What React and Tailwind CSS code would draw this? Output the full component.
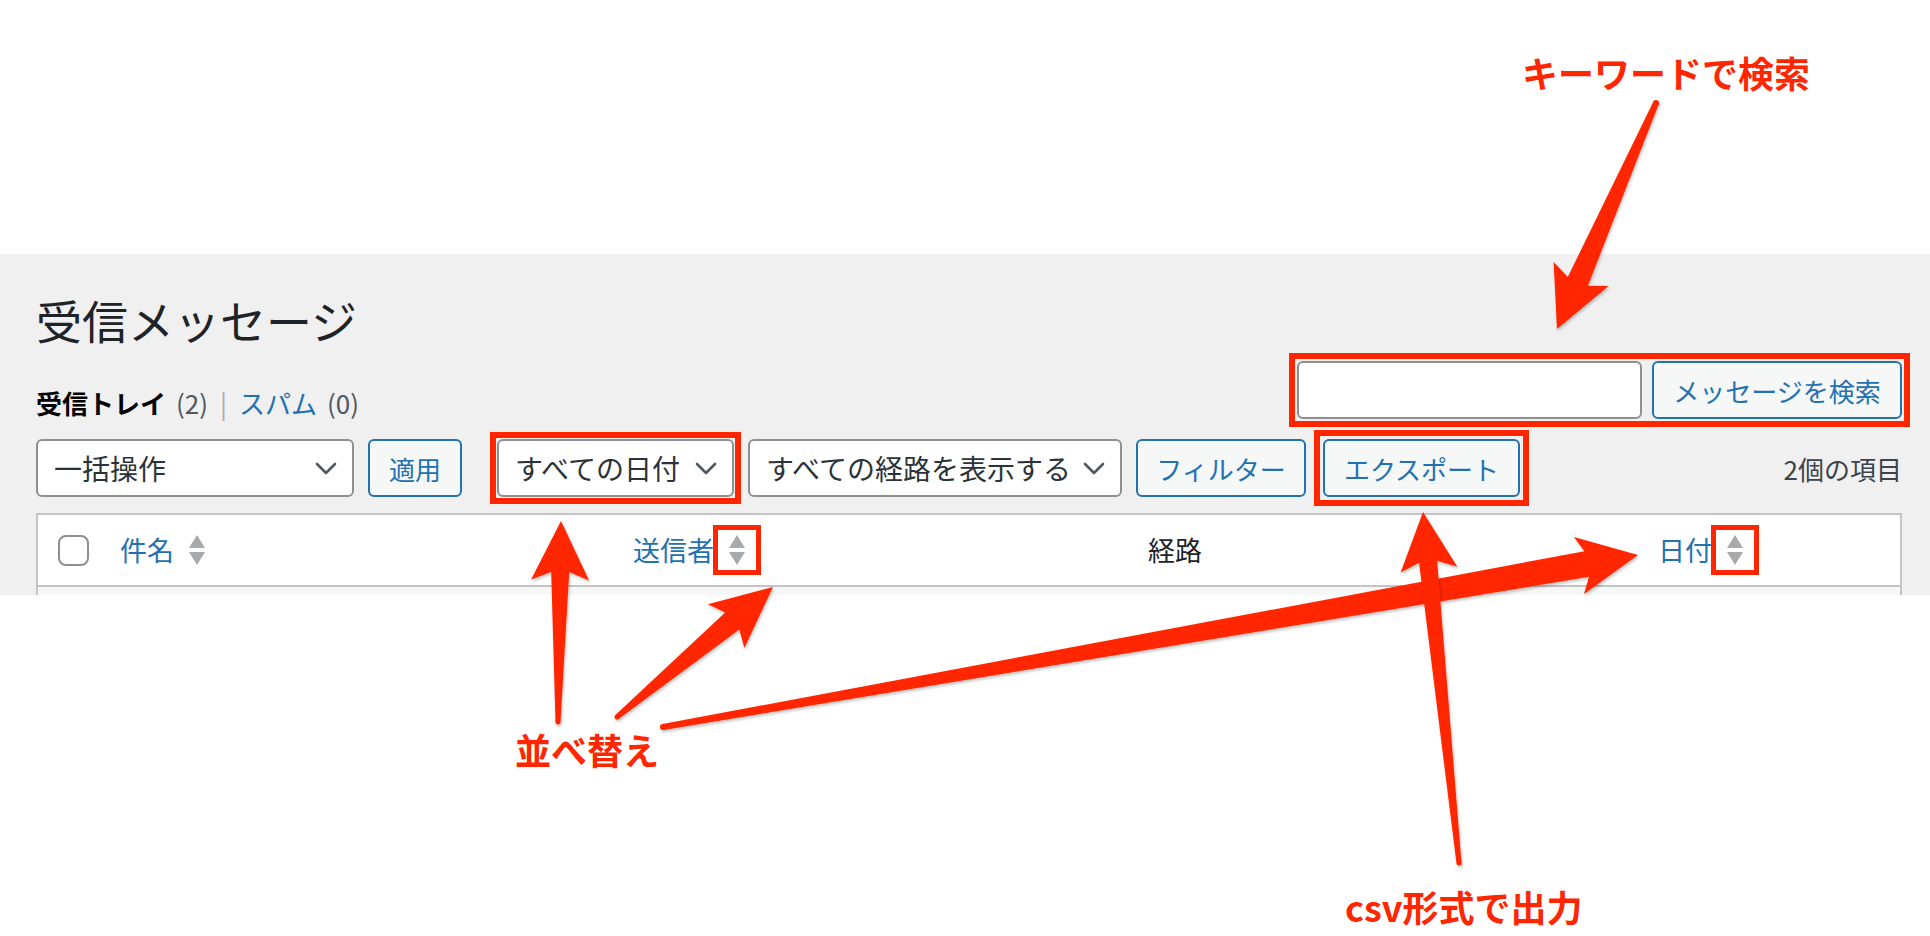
const RED = "#ff2600";

function arrowPoints(tx, ty, hx, hy, tailW, neckW, headW, headL, notch = 8) {
  const dx = hx - tx;
  const dy = hy - ty;
  const len = Math.hypot(dx, dy);
  const ux = dx / len;
  const uy = dy / len;
  const nx = -uy;
  const ny = ux;
  const bx = hx - ux * headL;
  const by = hy - uy * headL;
  const kx = bx + ux * notch;
  const ky = by + uy * notch;
  const pts = [
    [tx + (nx * tailW) / 2, ty + (ny * tailW) / 2],
    [kx + (nx * neckW) / 2, ky + (ny * neckW) / 2],
    [bx + (nx * headW) / 2, by + (ny * headW) / 2],
    [hx, hy],
    [bx - (nx * headW) / 2, by - (ny * headW) / 2],
    [kx - (nx * neckW) / 2, ky - (ny * neckW) / 2],
    [tx - (nx * tailW) / 2, ty - (ny * tailW) / 2],
  ];
  return pts.map((p) => p.map((v) => v.toFixed(1)).join(",")).join(" ");
}

// tail x,y / tip x,y / tail width / neck width / head width / head length
const arrows = [
  [1656, 103, 1557, 329, 6, 22, 60, 60],
  [558, 722, 561, 521, 5, 18, 58, 59],
  [617, 717, 773, 587, 5, 22, 57, 61],
  [663, 727, 1638, 555, 6, 26, 58, 60],
  [1459, 863, 1423, 512, 5, 18, 57, 58],
];

function Chevron() {
  return (
    <svg width="22" height="13" viewBox="0 0 22 13" className="shrink-0">
      <polyline points="2,2 11,11 20,2" fill="none" stroke="#50575e" strokeWidth="2.6" strokeLinecap="round" strokeLinejoin="round" />
    </svg>
  );
}

function SortIcon({ marked }) {
  return (
    <span
      className={
        "ml-[4px] inline-flex h-[40px] w-[38px] flex-col items-center justify-center gap-[4px] " +
        (marked ? "outline-[5px] outline-solid outline-[#ff2600]" : "")
      }
    >
      <svg width="16" height="13" viewBox="0 0 16 13">
        <polygon points="0,13 8,0 16,13" fill="#a7aaad" />
      </svg>
      <svg width="16" height="13" viewBox="0 0 16 13">
        <polygon points="0,0 16,0 8,13" fill="#a7aaad" />
      </svg>
    </span>
  );
}

function FakeSelect({ label, width }) {
  return (
    <div
      className={
        "flex h-[58px] items-center justify-between rounded-[6px] border-2 border-[#8c8f94] bg-white pl-[16px] pr-[15px] text-[28px] text-[#2c3338] " +
        width
      }
    >
      <span>{label}</span>
      <Chevron />
    </div>
  );
}

function Button({ children, className = "" }) {
  return (
    <button
      className={
        "flex h-[58px] items-center justify-center rounded-[6px] border-2 border-[#2271b1] bg-[#f6f7f7] text-[26px] text-[#2271b1] " +
        className
      }
    >
      {children}
    </button>
  );
}

export default function App() {
  return (
    <div className="relative h-[936px] w-[1930px] overflow-hidden bg-white font-['Noto_Sans_CJK_JP',sans-serif]">
      <div className="h-[254px]" />

      <div className="h-[341px] overflow-hidden bg-[#f0f0f1] pl-[36px] pr-[28px] pt-[35px]">
        <h1 className="text-[46px] leading-[60px] font-normal text-[#1d2327]">受信メッセージ</h1>

        <div className="mt-[12px] flex h-[58px] justify-between">
          <div className="mt-[24px] text-[26px] leading-[36px] text-[#50575e]">
            <span className="font-bold text-black">受信トレイ</span>
            <span className="ml-[10px]">(2)</span>
            <span className="mx-[12px] text-[#a7aaad]">|</span>
            <span className="text-[#2271b1]">スパム</span>
            <span className="ml-[10px]">(0)</span>
          </div>
          <div className="flex gap-[10px] outline-[6px] outline-solid outline-[#ff2600] outline-offset-[2px]">
            <input className="h-[58px] w-[345px] rounded-[6px] border-2 border-[#8c8f94] bg-white" />
            <Button className="w-[250px]">メッセージを検索</Button>
          </div>
        </div>

        <div className="mt-[20px] flex h-[58px] items-center">
          <FakeSelect label="一括操作" width="w-[318px]" />
          <Button className="ml-[14px] w-[94px]">適用</Button>
          <div className="ml-[35px] outline-[6px] outline-solid outline-[#ff2600] outline-offset-[1px]">
            <FakeSelect label="すべての日付" width="w-[237px]" />
          </div>
          <div className="ml-[14px]">
            <FakeSelect label="すべての経路を表示する" width="w-[374px]" />
          </div>
          <Button className="ml-[14px] w-[170px]">フィルター</Button>
          <div className="ml-[17px] outline-[6px] outline-solid outline-[#ff2600] outline-offset-[3px]">
            <Button className="w-[197px]">エクスポート</Button>
          </div>
          <span className="ml-auto text-[26px] text-[#3c434a]">2個の項目</span>
        </div>

        <div className="mt-[16px] border-2 border-[#c3c4c7] bg-white">
          <div className="grid h-[72px] grid-cols-[82px_513px_515px_510px_1fr] items-center border-b-2 border-[#c3c4c7] text-[27px]">
            <div className="pl-[20px]">
              <div className="h-[31px] w-[31px] rounded-[8px] border-2 border-[#8c8f94] bg-white" />
            </div>
            <div className="flex items-center text-[#2271b1]">
              件名
              <SortIcon />
            </div>
            <div className="flex items-center text-[#2271b1]">
              送信者
              <SortIcon marked />
            </div>
            <div className="text-[#1d2327]">経路</div>
            <div className="flex items-center text-[#2271b1]">
              日付
              <SortIcon marked />
            </div>
          </div>
          <div className="h-[20px] bg-[#f6f7f7]" />
        </div>
      </div>

      <div className="absolute left-[1522px] top-[54px] text-[36px] leading-[36px] font-bold text-[#ff2600]">
        キーワードで検索
      </div>
      <div className="absolute left-[515px] top-[731px] text-[36px] leading-[36px] font-bold text-[#ff2600]">
        並べ替え
      </div>
      <div className="absolute left-[1345px] top-[888px] text-[36px] leading-[36px] font-bold text-[#ff2600]">
        csv形式で出力
      </div>

      <svg className="pointer-events-none absolute left-0 top-0" width="1930" height="936" viewBox="0 0 1930 936">
        <defs>
          <filter id="shadow" x="-10%" y="-10%" width="120%" height="120%">
            <feDropShadow dx="1" dy="2" stdDeviation="1.5" floodColor="#000" floodOpacity="0.25" />
          </filter>
        </defs>
        {arrows.map((a, i) => (
          <g key={i} filter="url(#shadow)">
            <polygon points={arrowPoints(...a)} fill={RED} strokeLinejoin="round" />
            <circle cx={a[0]} cy={a[1]} r={a[4] / 2} fill={RED} />
          </g>
        ))}
      </svg>
    </div>
  );
}
